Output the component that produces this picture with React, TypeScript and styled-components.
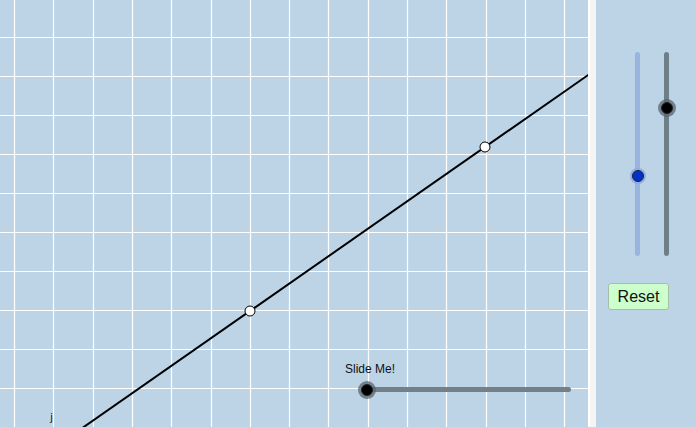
import React from "react";
import styled, { createGlobalStyle } from "styled-components";

const Global = createGlobalStyle`
  html, body { margin: 0; padding: 0; background: #bdd4e7; overflow: hidden; }
  body { font-family: "Liberation Sans", Arial, sans-serif; }
`;

const Page = styled.div`
  display: flex;
  width: 696px;
  height: 427px;
  background: #bdd4e7;
`;

const Canvas = styled.div`
  position: relative;
  width: 588px;
  height: 427px;
  flex: none;
  background: #bdd4e7;
  overflow: hidden;
`;

const Divider = styled.div`
  width: 8px;
  flex: none;
  background: linear-gradient(to right, #ffffff 0 2px, #f4f4f4 2px);
`;

const Panel = styled.div`
  flex: 1;
  display: flex;
  flex-direction: column;
  align-items: flex-start;
  padding: 52px 0 0 12px;
  gap: 27px;
  background: #bdd4e7;
`;

const SliderRow = styled.div`
  display: flex;
  gap: 24px;
  padding-left: 27px;
`;

const VTrack = styled.div<{ $color: string }>`
  position: relative;
  width: 5px;
  height: 204px;
  border-radius: 3px;
  background: ${(p) => p.$color};
`;

const Knob = styled.div<{ $fill: string; $halo: string; $ring: string }>`
  position: absolute;
  width: 12px;
  height: 12px;
  border-radius: 50%;
  background: ${(p) => p.$fill};
  border: 1px solid #222;
  box-shadow: 0 0 0 ${(p) => p.$ring} ${(p) => p.$halo};
  box-sizing: border-box;
  transform: translate(-50%, -50%);
`;

const ResetButton = styled.button`
  width: 61px;
  height: 27px;
  padding: 0;
  background: #ccffcc;
  border: 1px solid #a6bea6;
  border-radius: 3px;
  font-family: "Liberation Sans", Arial, sans-serif;
  font-size: 16px;
  color: #111;
  cursor: pointer;
`;

const HSlider = styled.div`
  position: absolute;
  left: 345px;
  top: 362px;
  display: flex;
  flex-direction: column;
`;

const SliderLabel = styled.span`
  font-size: 12px;
  color: #111;
  line-height: 15px;
`;

const HTrack = styled.div`
  position: relative;
  margin-top: 10px;
  margin-left: 20px;
  width: 206px;
  height: 5px;
  border-radius: 3px;
  background: #738089;
`;

const PointLabel = styled.span`
  position: absolute;
  left: 50px;
  top: 411px;
  font-size: 11px;
  font-family: "DejaVu Sans", sans-serif;
  color: #222;
`;

const Graph: React.FC = () => {
  const vx: number[] = [];
  for (let i = 0; i < 16; i++) vx.push(Math.round(14 + i * 39.3) + 0.5);
  const hy: number[] = [];
  for (let i = 0; i < 11; i++) hy.push(37.5 + i * 39);
  const slope = (147 - 311) / (485 - 250);
  const yAt = (x: number) => 311 + slope * (x - 250);
  return (
    <svg width="588" height="427" style={{ position: "absolute", left: 0, top: 0 }}>
      {vx.map((x) => (
        <line key={"v" + x} x1={x} y1={0} x2={x} y2={427} stroke="#ffffff" strokeWidth="1.2" />
      ))}
      {hy.map((y) => (
        <line key={"h" + y} x1={0} y1={y} x2={588} y2={y} stroke="#ffffff" strokeWidth="1.2" />
      ))}
      <line x1={60} y1={yAt(60)} x2={600} y2={yAt(600)} stroke="#000" strokeWidth="2" />
      <circle cx={250} cy={311} r={5} fill="#fff" stroke="#000" strokeWidth="1" />
      <circle cx={485} cy={147} r={5} fill="#fff" stroke="#000" strokeWidth="1" />
    </svg>
  );
};

export default function App() {
  return (
    <Page>
      <Global />
      <Canvas>
        <Graph />
        <HSlider>
          <SliderLabel>Slide Me!</SliderLabel>
          <HTrack>
            <Knob $fill="#000" $halo="rgba(90,100,110,0.75)" $ring="3px" style={{ left: 2, top: 2.5 }} />
          </HTrack>
        </HSlider>
        <PointLabel>j</PointLabel>
      </Canvas>
      <Divider />
      <Panel>
        <SliderRow>
          <VTrack $color="#9ab4e0">
            <Knob $fill="#0033cc" $halo="rgba(140,170,230,0.9)" $ring="2px" style={{ left: 2.5, top: 124 }} />
          </VTrack>
          <VTrack $color="#6f7f8a">
            <Knob $fill="#000" $halo="rgba(90,100,110,0.75)" $ring="3px" style={{ left: 2.5, top: 56 }} />
          </VTrack>
        </SliderRow>
        <ResetButton>Reset</ResetButton>
      </Panel>
    </Page>
  );
}
